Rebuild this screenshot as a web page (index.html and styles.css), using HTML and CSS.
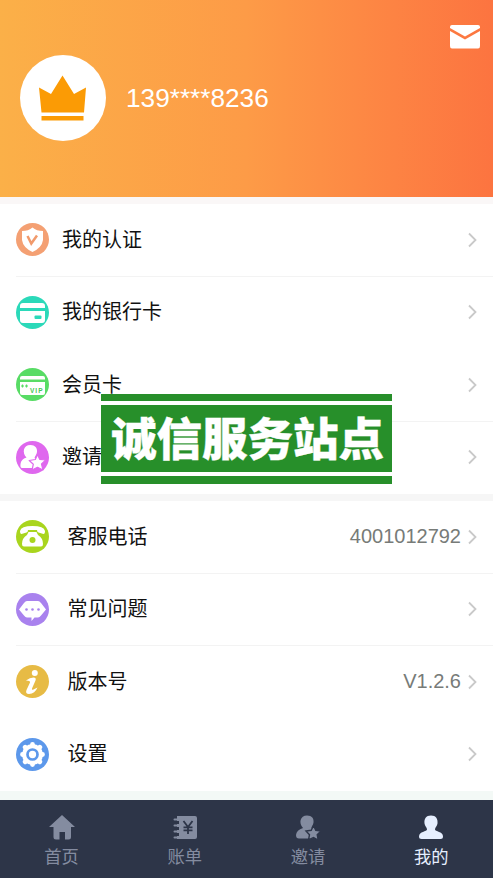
FILE: index.html
```html
<!DOCTYPE html>
<html lang="zh-CN">
<head>
<meta charset="utf-8">
<title>我的</title>
<link rel="stylesheet" href="styles.css">
</head>
<body>
<main class="page">
  <header class="profile">
    <div class="avatar">
      <svg width="86" height="86" viewBox="0 0 86 86" fill="#fb9b05"><path d="M19 32.500L31 39L42.500 20.500L54 39L66 32.500L64 57.500H21.500ZM21.500 61H63.500V65.500H21.500Z"/></svg>
    </div>
    <span class="phone">139****8236</span>
    <svg class="mail" width="30" height="24" viewBox="0 0 30 24" fill="#fff"><path d="M2 0H28Q30 0 30 2V3L15 11.500L0 3V2Q0 0 2 0ZM0 6L15 14.500L30 6V21Q30 23.500 28 23.500H2Q0 23.500 0 21Z"/></svg>
  </header>

  <section class="group">
    <div class="row line">
      <svg class="icon" viewBox="0 0 33 33"><circle cx="16.500" cy="16.500" r="16.500" fill="#f4a073"/><path fill="#fff" d="M16.500 4.500Q20.500 8 27 8V17Q26 24.500 16.500 29Q7 24.500 6 17V8Q12.500 8 16.500 4.500Z"/><path d="M11.500 13L15.300 20.500L21 12.500" fill="none" stroke="#f19a6c" stroke-width="2.500"/></svg>
      <span class="label">我的认证</span>
      <svg class="arrow" viewBox="0 0 9 16"><path d="M1 1.500L7.500 8L1 14.500"/></svg>
    </div>
    <div class="row">
      <svg class="icon" viewBox="0 0 33 33"><circle cx="16.500" cy="16.500" r="16.500" fill="#2bd9b9"/><path fill="#fff" d="M7 7H26Q29 7 29 10V12H4V10Q4 7 7 7ZM4 15H29V24Q29 27 26 27H7Q4 27 4 24Z"/><rect x="18.500" y="19.500" width="7" height="3.500" rx="1" fill="#2bd9b9"/></svg>
      <span class="label">我的银行卡</span>
      <svg class="arrow" viewBox="0 0 9 16"><path d="M1 1.500L7.500 8L1 14.500"/></svg>
    </div>
    <div class="row line">
      <svg class="icon" viewBox="0 0 33 33"><circle cx="16.500" cy="16.500" r="16.500" fill="#58dc65"/><path fill="#fff" d="M6 8H27Q29 8 29 10V11.500H4V10Q4 8 6 8ZM4 14H29V25Q29 27 27 27H6Q4 27 4 25Z"/><path d="M5 18H8M6.500 16.500V19.500M9 18H12M10.500 16.500V19.500" stroke="#58dc65" stroke-width="1.200"/><text class="vip" x="14" y="24.800" fill="#42c852">VIP</text></svg>
      <span class="label">会员卡</span>
      <svg class="arrow" viewBox="0 0 9 16"><path d="M1 1.500L7.500 8L1 14.500"/></svg>
    </div>
    <div class="row">
      <svg class="icon" viewBox="0 0 33 33"><circle cx="16.500" cy="16.500" r="16.500" fill="#df68ee"/><path fill="#fff" d="M14.500 4C19 4 21.500 7 21 11C20.700 13.500 19 15 18.500 17L21 19L18 27H6Q4 27 4.500 23Q5 18 10.500 16.500C6 12 7 4 14.500 4Z"/><path fill="#fff" stroke="#df68ee" stroke-width="1.200" stroke-linejoin="round" d="M21.500 13.500L23.700 18.300L29.800 19L25.500 23L27 29L21.500 26.300L16 29L17.300 23.300L13.200 19.500L19.300 18.500Z"/></svg>
      <span class="label">邀请</span>
      <svg class="arrow" viewBox="0 0 9 16"><path d="M1 1.500L7.500 8L1 14.500"/></svg>
    </div>
  </section>

  <section class="group wide">
    <div class="row line">
      <svg class="icon" viewBox="0 0 33 33"><circle cx="16.500" cy="16.500" r="16.500" fill="#a9d51e"/><path fill="#fff" d="M4 11Q5 6 16.500 6Q28 6 29 11Q29 14 27.500 14L22.500 12.500Q21 12 21 10H12Q12 12 10.500 12.500L5.500 14Q4 14 4 11ZM12.500 12H20.500L22 15Q27 18 27 24Q27 26.500 25 26.500H8Q6 26.500 6 24Q6 18 11 15Z"/><circle cx="16.500" cy="20" r="3" fill="#a9d51e"/></svg>
      <span class="label">客服电话</span>
      <span class="value">4001012792</span>
      <svg class="arrow" viewBox="0 0 9 16"><path d="M1 1.500L7.500 8L1 14.500"/></svg>
    </div>
    <div class="row line">
      <svg class="icon" viewBox="0 0 33 33"><circle cx="16.500" cy="16.500" r="16.500" fill="#a982ee"/><path fill="#fff" d="M11 8H22Q23.500 8 25 10L30 16.500L25 22.500Q23.500 24.500 22 24.500H18.500L15.500 28V24.500H11Q9.500 24.500 8 22.500L3 16.500L8 10Q9.500 8 11 8Z"/><g fill="#a982ee"><circle cx="10.500" cy="16.500" r="1.300"/><circle cx="16.500" cy="16.500" r="1.300"/><circle cx="22.500" cy="16.500" r="1.300"/></g></svg>
      <span class="label">常见问题</span>
      <svg class="arrow" viewBox="0 0 9 16"><path d="M1 1.500L7.500 8L1 14.500"/></svg>
    </div>
    <div class="row">
      <svg class="icon" viewBox="0 0 33 33"><circle cx="16.500" cy="16.500" r="16.500" fill="#e7bb45"/><circle cx="18.800" cy="8" r="3" fill="#fff"/><path fill="#fff" d="M10 15.500Q14 12.500 17.500 12.500Q20.500 12.500 19.500 15.500L16 23.500Q15.500 25.500 17.500 24.500L21.500 22.500Q19 28.500 13 29Q9 29 10.500 25L14 17.500Q14.500 15.500 10 15.500Z"/></svg>
      <span class="label">版本号</span>
      <span class="value">V1.2.6</span>
      <svg class="arrow" viewBox="0 0 9 16"><path d="M1 1.500L7.500 8L1 14.500"/></svg>
    </div>
    <div class="row">
      <svg class="icon" viewBox="0 0 33 33"><circle cx="16.500" cy="16.500" r="16.500" fill="#5c98eb"/><circle cx="16.500" cy="16.500" r="10.500" fill="#fff"/><g stroke="#fff" stroke-width="4.800" stroke-linecap="round"><path d="M16.500 6.500V26.500M6.500 16.500H26.500M9.200 9.200L23.800 23.800M23.800 9.200L9.200 23.800"/></g><circle cx="16.500" cy="16.500" r="5" fill="#fff" stroke="#5c98eb" stroke-width="2.700"/></svg>
      <span class="label">设置</span>
      <svg class="arrow" viewBox="0 0 9 16"><path d="M1 1.500L7.500 8L1 14.500"/></svg>
    </div>
  </section>

  <nav class="tabs">
    <div class="tab">
      <svg width="26" height="25" viewBox="0 0 26 25"><path d="M13 0L26 12H22V22Q22 24.500 19.500 24.500H16V17H10.500V24.500H7Q4.500 24.500 4.500 22V12H0Z"/></svg>
      <span>首页</span>
    </div>
    <div class="tab">
      <svg width="26" height="25" viewBox="0 0 26 25"><path d="M5 1H23Q25 1 25 3V22Q25 24 23 24H5V21H7V18H5V15H7V12H5V9H7V6H5Z"/><path class="rings" d="M7 4.500H2.500M7 10.500H2.500M7 16.500H2.500M7 22.500H2.500"/><path class="yen" d="M11.500 6L16 12L20.500 6M16 12V19M11.500 12.300H20.500M11.500 15.300H20.500"/></svg>
      <span>账单</span>
    </div>
    <div class="tab">
      <svg width="26" height="25" viewBox="0 0 26 25"><path d="M12 .5C17 .5 19 3.500 18.500 7.500C18.200 10 16.500 11.500 16.500 13L18 15V23.500H4Q1 23.500 1 20Q1.500 15 8 13C3.500 8 5 .5 12 .5Z"/><path class="star" d="M18.500 10.500L20.800 15.300L26 16L22.200 19.700L23.200 25L18.500 22.500L13.500 25L14.500 19.700L11 16L16.200 15.300Z"/></svg>
      <span>邀请</span>
    </div>
    <div class="tab active">
      <svg width="26" height="25" viewBox="0 0 26 25"><path d="M13 .5C18 .5 20 4 19.500 8.500C19.200 11 17 12.500 17 14.500C17 16.500 25 16.500 25 21.500Q25 24 22.500 24H3.500Q1 24 1 21.500C1 16.500 9 16.500 9 14.500C9 12.500 6.800 11 6.500 8.500C6 4 8 .5 13 .5Z"/></svg>
      <span>我的</span>
    </div>
  </nav>

  <div class="banner"><div class="banner-text">诚信服务站点</div></div>
</main>
</body>
</html>
```
FILE: styles.css
```css
* { box-sizing: border-box; }
body {
  margin: 0;
  background: #fff;
  font-family: "Liberation Sans", "Noto Sans CJK SC", sans-serif;
}
.page {
  position: relative;
  width: 493px;
  height: 878px;
  overflow: hidden;
  display: flex;
  flex-direction: column;
}
svg { display: block; flex: none; }
.profile {
  height: 197px;
  flex: none;
  display: flex;
  align-items: center;
  padding: 0 13px 2px 20px;
  background: linear-gradient(90deg, #fbb048 0%, #fd9b47 50%, #fd8343 80%, #fc7440 100%);
}
.avatar {
  width: 86px;
  height: 86px;
  border-radius: 50%;
  background: #fff;
}
.phone {
  margin-left: 20px;
  color: #fff;
  font-size: 26.2px;
  line-height: 30px;
}
.mail { margin: 25px 0 0 auto; align-self: flex-start; }
.group {
  height: 297px;
  flex: none;
  border-top: 7px solid #f6f6f6;
  background: #fff;
  display: grid;
  grid-template-rows: repeat(4, 72.5px);
}
.profile + .group { border-top-color: #faf7f7; }
.row {
  margin-left: 16px;
  padding-right: 16px;
  display: flex;
  align-items: center;
  border-bottom: 1px solid transparent;
}
.line { border-bottom-color: #f3f3f3; }
.icon { width: 33px; height: 33px; }
.label {
  margin-left: 13px;
  color: #111;
  font-size: 20px;
  line-height: 28px;
}
.wide .label { margin-left: 18.5px; }
.value {
  margin-left: auto;
  color: #777b78;
  font-size: 20px;
}
.arrow {
  width: 9px;
  height: 16px;
  margin-left: auto;
  fill: none;
  stroke: #c9c9c9;
  stroke-width: 1.8;
}
.value + .arrow { margin-left: 7px; }
.vip {
  font-size: 6.5px;
  font-weight: bold;
  letter-spacing: 1px;
}
.tabs {
  height: 87px;
  flex: none;
  border-top: 9px solid #f3f9f6;
  background: #2d3548;
  display: grid;
  grid-template-columns: repeat(4, 1fr);
}
.tab {
  display: flex;
  flex-direction: column;
  align-items: center;
  padding-top: 15px;
  color: #848ca0;
  fill: #848ca0;
  font-size: 17.3px;
  line-height: 24px;
}
.tab span { margin-top: 5px; }
.active { color: #e6efff; fill: #e6efff; }
.rings { stroke: #848ca0; stroke-width: 2; stroke-linecap: round; }
.yen { fill: none; stroke: #2d3548; stroke-width: 1.8; }
.star { stroke: #2d3548; stroke-width: 1.4; }
.banner {
  position: absolute;
  left: 101px;
  top: 394px;
  width: 291px;
  height: 90px;
  padding: 7px 0 8px;
  background: #278f2a;
}
.banner-text {
  height: 75px;
  border: solid #fff;
  border-width: 4px 0;
  padding-left: 2px;
  color: #fff;
  font-family: "Noto Sans CJK SC", sans-serif;
  font-size: 45.5px;
  font-weight: 900;
  line-height: 63px;
  text-align: center;
  white-space: nowrap;
  -webkit-text-stroke: .4px #fff;
}
```
